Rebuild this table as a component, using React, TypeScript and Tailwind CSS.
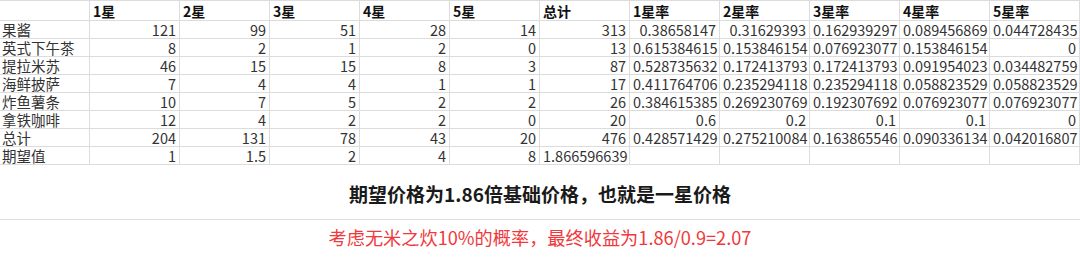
const headers = ["", "1星", "2星", "3星", "4星", "5星", "总计", "1星率", "2星率", "3星率", "4星率", "5星率"];

const rows: string[][] = [
  ["果酱", "121", "99", "51", "28", "14", "313", "0.38658147", "0.31629393", "0.162939297", "0.089456869", "0.044728435"],
  ["英式下午茶", "8", "2", "1", "2", "0", "13", "0.615384615", "0.153846154", "0.076923077", "0.153846154", "0"],
  ["提拉米苏", "46", "15", "15", "8", "3", "87", "0.528735632", "0.172413793", "0.172413793", "0.091954023", "0.034482759"],
  ["海鲜披萨", "7", "4", "4", "1", "1", "17", "0.411764706", "0.235294118", "0.235294118", "0.058823529", "0.058823529"],
  ["炸鱼薯条", "10", "7", "5", "2", "2", "26", "0.384615385", "0.269230769", "0.192307692", "0.076923077", "0.076923077"],
  ["拿铁咖啡", "12", "4", "2", "2", "0", "20", "0.6", "0.2", "0.1", "0.1", "0"],
  ["总计", "204", "131", "78", "43", "20", "476", "0.428571429", "0.275210084", "0.163865546", "0.090336134", "0.042016807"],
  ["期望值", "1", "1.5", "2", "4", "8", "1.866596639", "", "", "", "", ""],
];

export default function App() {
  return (
    <div className="w-[1080px] h-[258px] bg-white overflow-hidden font-['Noto_Sans_CJK_SC',sans-serif]">
      {/* sheet */}
      <div className="grid grid-cols-[repeat(12,90px)] border-t border-[#dcdcdc]">
        {headers.map((h, i) => (
          <div
            key={"h" + i}
            className="h-[20px] border-r border-b border-[#dcdcdc] px-[3px] text-[14px] leading-[20px] font-bold text-[#111] whitespace-nowrap"
          >
            {h}
          </div>
        ))}
        {rows.map((r, ri) =>
          r.map((c, ci) => (
            <div
              key={ri + "-" + ci}
              className={
                ci === 0
                  ? "h-[18px] border-r border-b border-[#dcdcdc] px-[2px] text-[14.5px] leading-[18px] text-[#333] whitespace-nowrap"
                  : "h-[18px] border-r border-b border-[#dcdcdc] px-[3px] text-[14.5px] leading-[18px] text-[#333] text-right whitespace-nowrap"
              }
            >
              {c}
            </div>
          ))
        )}
      </div>

      {/* summary */}
      <div className="h-[55px] pt-[4px] flex items-center justify-center border-b border-[#dedede]">
        <p className="text-[19px] font-bold text-[#1a1a1a]">期望价格为1.86倍基础价格，也就是一星价格</p>
      </div>
      <div className="h-[36px] flex items-center justify-center">
        <p className="text-[18.2px] text-[#f0393c]">考虑无米之炊10%的概率，最终收益为1.86/0.9=2.07</p>
      </div>
    </div>
  );
}
